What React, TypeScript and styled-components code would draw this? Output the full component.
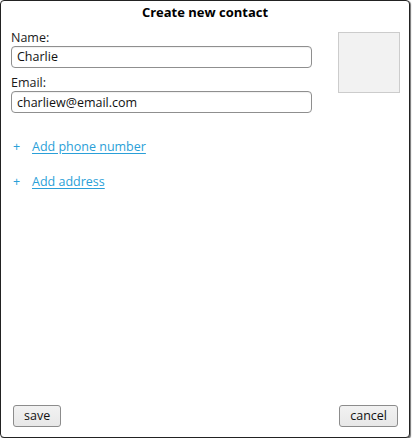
import React from "react";
import styled, { createGlobalStyle } from "styled-components";

const Global = createGlobalStyle`
  html, body { margin: 0; padding: 0; background: #ffffff; }
  body { font-family: "Open Sans", "Noto Sans", sans-serif; font-size: 12.5px; color: #1a1a1a; }
  * { box-sizing: border-box; }
`;

const Window = styled.div`
  width: 410px;
  height: 438px;
  border: 1px solid #222222;
  border-radius: 4px;
  box-shadow: 1px 1px 1px rgba(0, 0, 0, 0.55);
  background: #ffffff;
  display: flex;
  flex-direction: column;
`;

const Title = styled.div`
  font-weight: 700;
  font-size: 13px;
  line-height: 16px;
  text-align: center;
  color: #000000;
  padding-top: 3px;
  height: 28.5px;
`;

const Body = styled.div`
  display: flex;
  justify-content: space-between;
  align-items: flex-start;
  padding: 0 9px 0 10px;
`;

const Form = styled.div`
  display: flex;
  flex-direction: column;
  width: 301px;
`;

const Label = styled.label<{ $gap?: number }>`
  display: block;
  line-height: 16px;
  color: #1a1a1a;
  margin-top: ${(p) => p.$gap ?? 0}px;
`;

const Input = styled.input`
  width: 301px;
  height: 22px;
  border: 1px solid #8f8f8f;
  border-radius: 4px;
  padding: 0 5px;
  font-family: "Open Sans", "Noto Sans", sans-serif;
  font-size: 12.5px;
  color: #111111;
  background: #ffffff;
  box-shadow: inset 0 1px 1px rgba(0, 0, 0, 0.06);
  outline: none;
`;

const Photo = styled.div`
  width: 62px;
  height: 61px;
  margin-top: 2.5px;
  background: #f2f2f2;
  border: 1px solid #cccccc;
`;

const Links = styled.div`
  display: flex;
  flex-direction: column;
  gap: 19px;
  padding: 26px 0 0 12px;
`;

const LinkRow = styled.div`
  display: flex;
  align-items: center;
  line-height: 16px;
  color: #2a9fd8;
`;

const Plus = styled.span`
  width: 19px;
  color: #2a9fd8;
`;

const Link = styled.a`
  color: #2a9fd8;
  text-decoration: underline;
  text-underline-offset: 2px;
  cursor: pointer;
`;

const Spacer = styled.div`
  flex: 1;
`;

const Footer = styled.div`
  display: flex;
  justify-content: space-between;
  padding: 0 11px 10px 12px;
`;

const Button = styled.button`
  height: 22px;
  padding: 0 10px;
  border: 1px solid #8c8c8c;
  border-radius: 3px;
  background: linear-gradient(#f2f2f2, #e8e8e8);
  font-family: "Open Sans", "Noto Sans", sans-serif;
  font-size: 12.5px;
  color: #111111;
  line-height: 18px;
`;

export default function App() {
  return (
    <>
      <Global />
      <Window>
        <Title>Create new contact</Title>
        <Body>
          <Form>
            <Label>Name:</Label>
            <Input defaultValue="Charlie" />
            <Label $gap={7.5}>Email:</Label>
            <Input defaultValue="charliew@email.com" />
          </Form>
          <Photo />
        </Body>
        <Links>
          <LinkRow>
            <Plus>+</Plus>
            <Link>Add phone number</Link>
          </LinkRow>
          <LinkRow>
            <Plus>+</Plus>
            <Link>Add address</Link>
          </LinkRow>
        </Links>
        <Spacer />
        <Footer>
          <Button>save</Button>
          <Button>cancel</Button>
        </Footer>
      </Window>
    </>
  );
}
